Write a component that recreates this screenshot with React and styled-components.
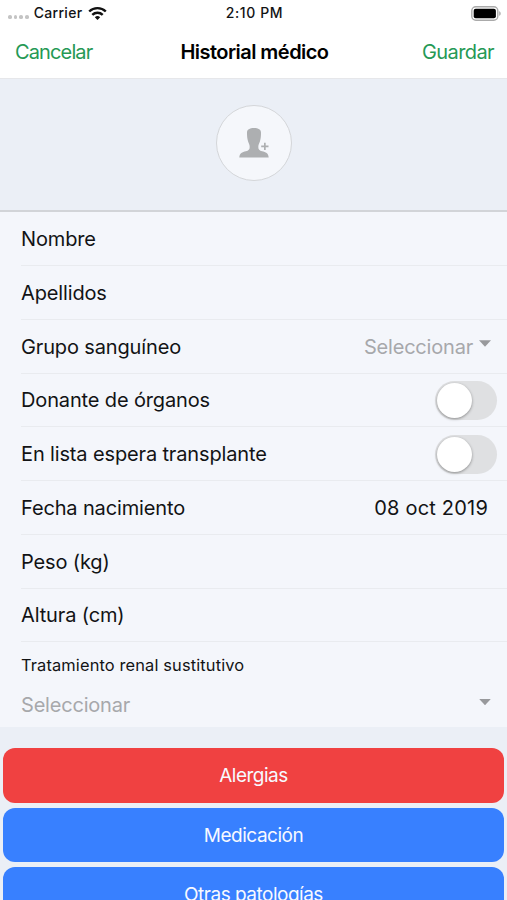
import { useState } from 'react';
import styled, { createGlobalStyle } from 'styled-components';

const GlobalStyle = createGlobalStyle`
	* {
		box-sizing: border-box;
	}
	body {
		margin: 0;
		background: #ebeff6;
		color: #121315;
		font-family: Inter, 'Liberation Sans', sans-serif;
		font-size: 20px;
	}
	button {
		font: inherit;
		border: 0;
		padding: 0;
		cursor: pointer;
	}
`;

const Screen = styled.main`
	width: 100%;
	height: 900px;
	overflow: hidden;
`;

const StatusBar = styled.div`
	display: grid;
	grid-template-columns: 1fr auto 1fr;
	align-items: center;
	height: 26px;
	padding: 0 6px 0 8px;
	background: #fff;
	font-size: 14px;
	font-weight: 500;
	line-height: 26px;
	.carrier {
		display: flex;
		align-items: center;
	}
	.name {
		margin: 0 6px 0 5px;
		letter-spacing: 0.3px;
	}
	.time {
		letter-spacing: 0.6px;
	}
	.battery {
		justify-self: end;
	}
`;

const Dots = styled.span`
	display: flex;
	gap: 2px;
	padding-top: 8px;
	i {
		width: 3.7px;
		height: 3.7px;
		border-radius: 50%;
		background: #c4c4c4;
	}
`;

const NavBar = styled.header`
	display: grid;
	grid-template-columns: 1fr auto 1fr;
	align-items: center;
	height: 53px;
	padding: 0 13px 0 15px;
	background: #fff;
	border-bottom: 1px solid #e6e7ea;
	h1 {
		margin: 0;
		color: #000;
		font-size: 20px;
		font-weight: 600;
		letter-spacing: -0.54px;
	}
`;

const NavButton = styled.button`
	justify-self: ${({ $end }) => ($end ? 'end' : 'start')};
	background: none;
	color: #259955;
	letter-spacing: ${({ $end }) => ($end ? -0.6 : -0.87)}px;
`;

const PhotoArea = styled.section`
	display: flex;
	justify-content: center;
	height: 133.4px;
	padding-top: 26px;
	border-bottom: 2px solid #d2d4d8;
`;

const Avatar = styled.button`
	display: flex;
	align-items: center;
	justify-content: center;
	width: 76px;
	height: 76px;
	border: 1.5px solid #d4d6d9;
	border-radius: 50%;
	background: #f5f7fb;
`;

const Form = styled.section`
	height: 514.6px;
	background: #f4f6fb;
`;

const Row = styled.div`
	display: flex;
	align-items: center;
	justify-content: space-between;
	height: 53.75px;
	margin-left: 21px;
	padding-top: 0.5px;
	padding-right: ${({ $right = 20 }) => $right}px;
	border-bottom: 1px solid #e9ebef;
`;

const Label = styled.span`
	letter-spacing: ${({ $spacing = -0.14 }) => $spacing}px;
`;

const Placeholder = styled.span`
	color: #a7a8ab;
	letter-spacing: -0.2px;
`;

const Select = styled.span`
	display: flex;
	align-items: center;
	gap: 6px;
`;

const Caret = styled.i`
	width: 12px;
	height: 6.5px;
	margin-bottom: 6px;
	background: #98999c;
	clip-path: polygon(0 0, 100% 0, 50% 100%);
`;

const Toggle = styled.button`
	display: flex;
	align-items: center;
	justify-content: ${({ $on }) => ($on ? 'flex-end' : 'flex-start')};
	width: 62px;
	height: 39px;
	padding: 0 1.5px;
	border-radius: 20px;
	background: ${({ $on }) => ($on ? '#259955' : '#dfe0e2')};
	i {
		width: 35px;
		height: 35px;
		border-radius: 50%;
		background: #fff;
		box-shadow: 0 1px 3px rgba(0, 0, 0, 0.38);
	}
`;

const Treatment = styled.div`
	margin-left: 21px;
	padding: 13px 16px 0 0;
	.title {
		font-size: 16.4px;
		line-height: 20px;
		letter-spacing: 0.14px;
	}
	.select {
		display: flex;
		align-items: center;
		justify-content: space-between;
		height: 28px;
		margin-top: 15.6px;
	}
`;

const Actions = styled.section`
	display: flex;
	flex-direction: column;
	gap: 5px;
	padding: 21px 3px 0;
`;

const ActionButton = styled.button`
	flex: none;
	height: 54.6px;
	padding-top: 1px;
	border-radius: 12px;
	background: ${({ $danger }) => ($danger ? '#f04141' : '#3880ff')};
	color: #f7f9ff;
	font-size: 19px;
	letter-spacing: -0.5px;
`;

const WifiIcon = () => (
	<svg width="19" height="15" viewBox="0 0 19 15" fill="none" stroke="#111" strokeWidth="2.4">
		<path d="M1.2 5.5a11.8 11.8 0 0 1 16.6 0" />
		<path d="M4.3 8.9a7.4 7.4 0 0 1 10.4 0" />
		<path d="M6.8 11.3a3.9 3.9 0 0 1 5.4 0L9.5 14z" fill="#111" stroke="none" />
	</svg>
);

const BatteryIcon = () => (
	<svg className="battery" width="30" height="15" viewBox="0 0 30 15">
		<rect x="0.8" y="0.8" width="26" height="13.4" rx="4" fill="#fff" stroke="#aaa" strokeWidth="1.4" />
		<rect x="2.7" y="2.7" width="22.2" height="9.6" rx="2" fill="#000" />
		<path d="M28.2 5.2c2 .7 2 3.9 0 4.6z" fill="#aaa" />
	</svg>
);

const PersonIcon = () => (
	<svg width="30" height="30" viewBox="0 0 30 30" fill="#adafb1">
		<path d="M15 0c4.4 0 7 1.6 7 4.6 0 3.4-.2 6.3-1.1 8.8-.8 2.2-1.6 3.3-1.6 5.6 0 2.6 1.2 3.6 3.8 4.3 3.7.9 6.3 1.9 6.6 6.2H.3c.3-4.3 2.9-5.3 6.6-6.2 2.6-.7 3.8-1.7 3.8-4.3 0-2.3-.8-3.4-1.6-5.6C8.2 10.9 8 8 8 4.6 8 1.6 10.6 0 15 0z" />
		<path d="M25 14.7h1.7v2.8h2.8v1.7h-2.8V22H25v-2.8h-2.8v-1.7H25z" />
	</svg>
);

const App = () => {
	const [donor, setDonor] = useState(false);
	const [waiting, setWaiting] = useState(false);

	return (
		<>
			<GlobalStyle />
			<Screen>
				<StatusBar>
					<div className="carrier">
						<Dots>
							<i />
							<i />
							<i />
							<i />
						</Dots>
						<span className="name">Carrier</span>
						<WifiIcon />
					</div>
					<span className="time">2:10 PM</span>
					<BatteryIcon />
				</StatusBar>
				<NavBar>
					<NavButton>Cancelar</NavButton>
					<h1>Historial médico</h1>
					<NavButton $end>Guardar</NavButton>
				</NavBar>
				<PhotoArea>
					<Avatar aria-label="Foto">
						<PersonIcon />
					</Avatar>
				</PhotoArea>
				<Form>
					<Row>
						<Label>Nombre</Label>
					</Row>
					<Row>
						<Label>Apellidos</Label>
					</Row>
					<Row $right={16}>
						<Label>Grupo sanguíneo</Label>
						<Select>
							<Placeholder>Seleccionar</Placeholder>
							<Caret />
						</Select>
					</Row>
					<Row $right={10}>
						<Label>Donante de órganos</Label>
						<Toggle $on={donor} aria-label="Donante" onClick={() => setDonor(!donor)}>
							<i />
						</Toggle>
					</Row>
					<Row $right={10}>
						<Label>En lista espera transplante</Label>
						<Toggle $on={waiting} aria-label="En lista" onClick={() => setWaiting(!waiting)}>
							<i />
						</Toggle>
					</Row>
					<Row $right={19}>
						<Label>Fecha nacimiento</Label>
						<Label $spacing={0.2}>08 oct 2019</Label>
					</Row>
					<Row>
						<Label>Peso (kg)</Label>
					</Row>
					<Row>
						<Label>Altura (cm)</Label>
					</Row>
					<Treatment>
						<div className="title">Tratamiento renal sustitutivo</div>
						<div className="select">
							<Placeholder>Seleccionar</Placeholder>
							<Caret />
						</div>
					</Treatment>
				</Form>
				<Actions>
					<ActionButton $danger>Alergias</ActionButton>
					<ActionButton>Medicación</ActionButton>
					<ActionButton>Otras patologías</ActionButton>
				</Actions>
			</Screen>
		</>
	);
};

export default App;
